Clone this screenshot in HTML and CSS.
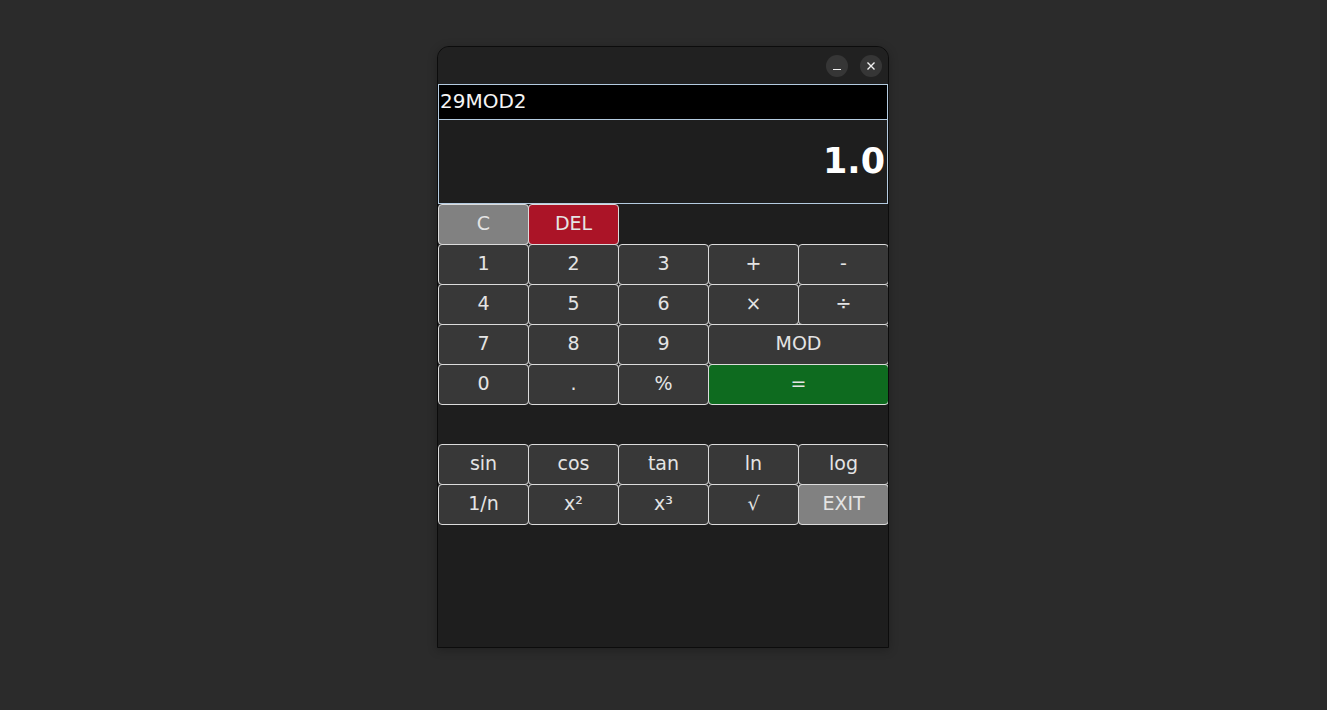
FILE: index.html
```html
<!DOCTYPE html>
<html lang="en">
<head>
  <meta charset="UTF-8" />
  <title>Calculator</title>
  <link rel="stylesheet" href="styles.css">
</head>
<body>

  <div class="window">
    <div class="titlebar">
      <button class="win-btn" title="Minimize">
        <svg width="10" height="10" viewBox="0 0 10 10"><path d="M1 8.5H9" stroke="#f0f0f0" stroke-width="1.2"/></svg>
      </button>
      <button class="win-btn" title="Close">
        <svg width="10" height="10" viewBox="0 0 10 10"><path d="M1.5 1.5L8.5 8.5M8.5 1.5L1.5 8.5" stroke="#f0f0f0" stroke-width="1.4"/></svg>
      </button>
    </div>

    <input class="expr" type="text" value="29MOD2" />
    <div class="result">1.0</div>

    <div class="keys">
      <button class="key gray">C</button>
      <button class="key red">DEL</button>
      <span class="empty"></span>
      <span class="empty"></span>
      <span class="empty"></span>

      <button class="key">1</button>
      <button class="key">2</button>
      <button class="key">3</button>
      <button class="key">+</button>
      <button class="key">-</button>

      <button class="key">4</button>
      <button class="key">5</button>
      <button class="key">6</button>
      <button class="key">×</button>
      <button class="key">÷</button>

      <button class="key">7</button>
      <button class="key">8</button>
      <button class="key">9</button>
      <button class="key wide">MOD</button>

      <button class="key">0</button>
      <button class="key">.</button>
      <button class="key">%</button>
      <button class="key wide green">=</button>
    </div>

    <div class="spacer"></div>

    <div class="keys">
      <button class="key">sin</button>
      <button class="key">cos</button>
      <button class="key">tan</button>
      <button class="key">ln</button>
      <button class="key">log</button>

      <button class="key">1/n</button>
      <button class="key">x²</button>
      <button class="key">x³</button>
      <button class="key">√</button>
      <button class="key gray">EXIT</button>
    </div>
  </div>

</body>
</html>
```

FILE: styles.css
```css
* {
  box-sizing: border-box;
  margin: 0;
  padding: 0;
}

body {
  font-family: 'DejaVu Sans', sans-serif;
  background-color: #2b2b2b;
  min-height: 100vh;
  padding-top: 46px;
}

.window {
  width: 452px;
  height: 602px;
  margin-left: calc(50% - 226.5px);
  background: #1e1e1e;
  border: 1px solid #0c0c0c;
  border-radius: 12px 12px 0 0;
  overflow: hidden;
  box-shadow: 0 2px 10px rgba(0, 0, 0, 0.25);
  display: flex;
  flex-direction: column;
}

.titlebar {
  height: 37px;
  flex-shrink: 0;
  background: #212121;
  display: flex;
  justify-content: flex-end;
  align-items: center;
  gap: 12px;
  padding-right: 6px;
}

.win-btn {
  width: 22px;
  height: 22px;
  border: none;
  border-radius: 50%;
  background: #363636;
  display: flex;
  align-items: center;
  justify-content: center;
}

.expr {
  height: 36px;
  flex-shrink: 0;
  background: #000;
  border: 1px solid #b4cbe0;
  color: #f4f4f4;
  font-family: 'DejaVu Sans', sans-serif;
  font-size: 20px;
  padding: 0 1px 2px;
  outline: none;
}

.result {
  height: 84px;
  flex-shrink: 0;
  background: #1e1e1e;
  border: 1px solid #b4cbe0;
  border-top: none;
  color: #ffffff;
  font-size: 35px;
  font-weight: bold;
  display: flex;
  align-items: center;
  justify-content: flex-end;
  padding: 0 2px 2px 0;
}

.keys {
  display: grid;
  grid-template-columns: repeat(5, 90px);
  grid-auto-rows: 40px;
}

.key {
  width: 91px;
  height: 41px;
  background: #383838;
  color: #e4e4e4;
  border: 1px solid #dcdcdc;
  border-radius: 4px;
  font-family: 'DejaVu Sans', sans-serif;
  font-size: 19px;
  display: flex;
  align-items: center;
  justify-content: center;
  padding-bottom: 3px;
  cursor: pointer;
}

.key.wide {
  grid-column: span 2;
  width: 181px;
}

.key.gray {
  background: #818181;
}

.key.red {
  background: #ab1427;
}

.key.green {
  background: #0e6b1f;
}

.spacer {
  height: 40px;
  flex-shrink: 0;
}
```
